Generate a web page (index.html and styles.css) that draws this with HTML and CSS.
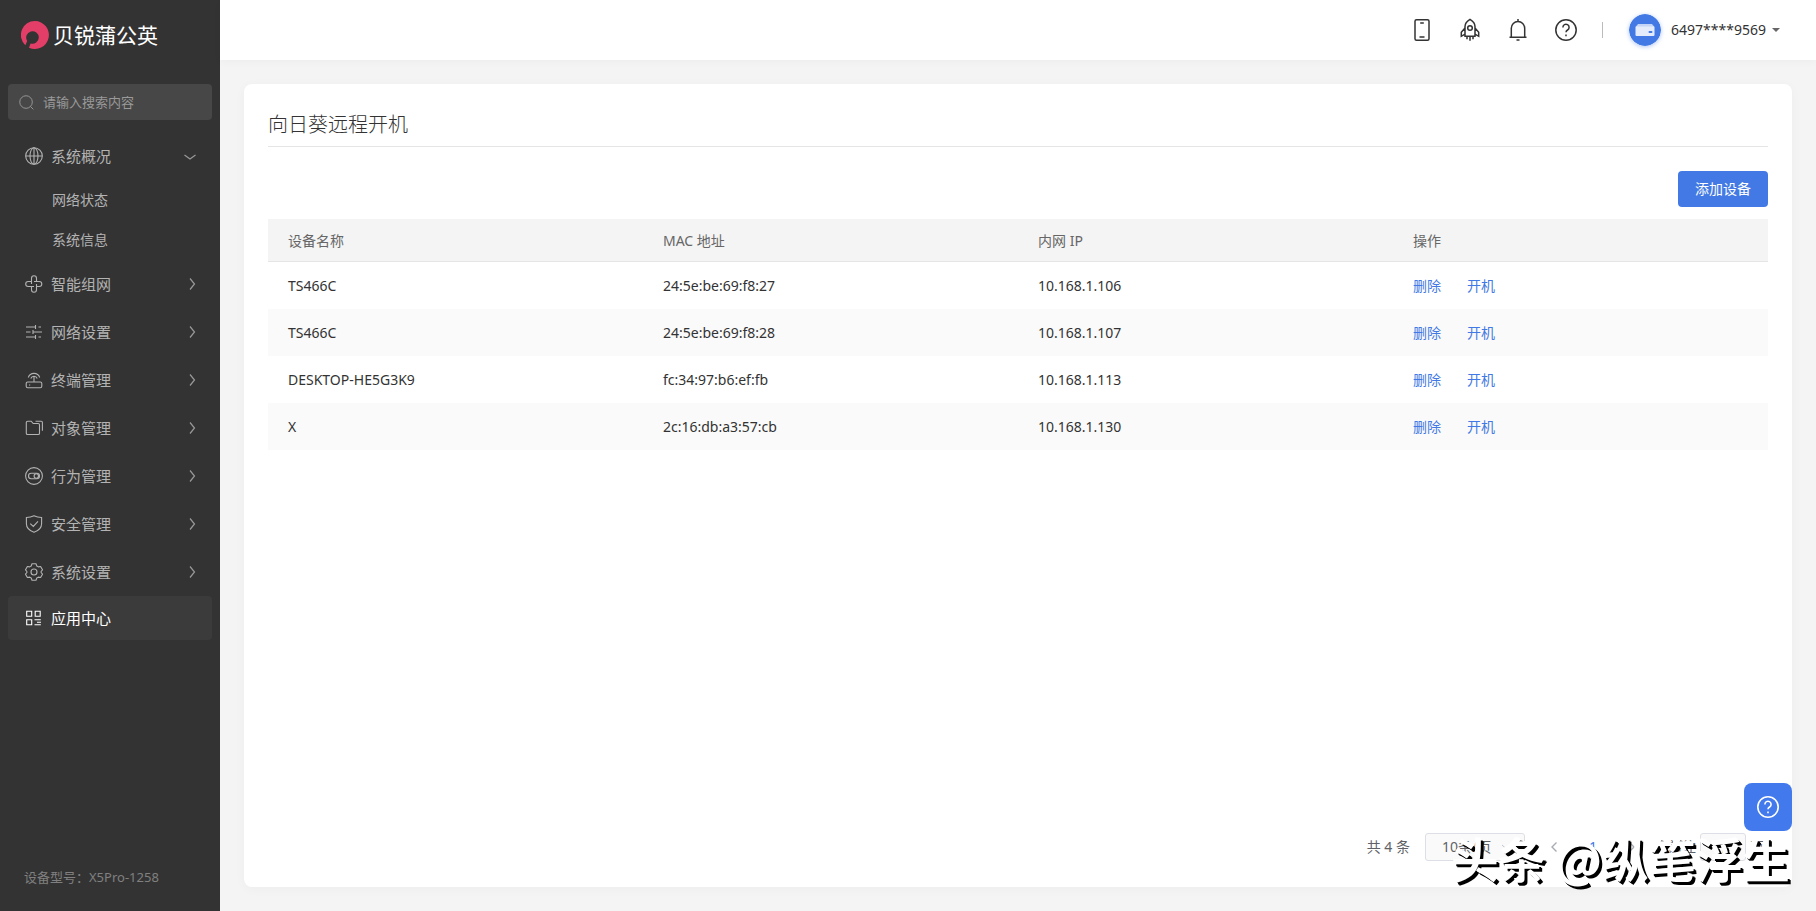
FILE: index.html
```
<!DOCTYPE html>
<html lang="zh-CN">
<head>
<meta charset="utf-8">
<title>向日葵远程开机</title>
<link rel="stylesheet" href="styles.css">
</head>
<body>
<div class="app">
  <aside class="sidebar">
    <a class="brand" href="#">
      <svg class="brand-mark" viewBox="0 0 28 28"><path fill="#e33e67" d="M14 0a14 14 0 1 1-6 26.700l1.600-4.200a6.300 6.300 0 1 0-3.400-2.600L4.300 24.200A14 14 0 0 1 14 0z"/></svg>
      <span>贝锐蒲公英</span>
    </a>
    <label class="search">
      <svg class="search-icon" viewBox="0 0 16 16"><circle cx="7.500" cy="7.500" r="6.700"/><path d="M12.300 12.300l3 3"/></svg>
      <input type="text" placeholder="请输入搜索内容" aria-label="搜索">
    </label>
    <nav class="menu">
      <a class="item" href="#">
        <svg class="icon" viewBox="0 0 18 18"><circle cx="9" cy="9" r="8.300"/><ellipse cx="9" cy="9" rx="4" ry="8.300"/><path d="M.7 9h16.600M9 .7v16.600"/></svg>
        <span>系统概况</span>
        <svg class="arrow down" viewBox="0 0 12 12"><path d="M.5 5L6 9l5.500-4"/></svg>
      </a>
      <a class="sub" href="#">网络状态</a>
      <a class="sub" href="#">系统信息</a>
      <a class="item" href="#">
        <svg class="icon" viewBox="0 0 18 18"><path d="M6.500 9V3.200a2.500 2.500 0 0 1 5 0v3.300M9 6.500h5.300a2.500 2.500 0 0 1 0 5h-2.800M11.500 9v5.800a2.500 2.500 0 0 1-5 0v-3.300M9 11.500H3.200a2.500 2.500 0 0 1 0-5h3.300"/></svg>
        <span>智能组网</span>
        <svg class="arrow" viewBox="0 0 12 12"><path d="M4 .5L8.500 6 4 11.500"/></svg>
      </a>
      <a class="item" href="#">
        <svg class="icon" viewBox="0 0 18 18"><path d="M1 4h10M13.500 4H16M10.500 2v4M1 9h4.500M8 9h9M8 7v4M1 14h10M13.500 14H16M10.500 12v4"/></svg>
        <span>网络设置</span>
        <svg class="arrow" viewBox="0 0 12 12"><path d="M4 .5L8.500 6 4 11.500"/></svg>
      </a>
      <a class="item" href="#">
        <svg class="icon" viewBox="0 0 18 18"><rect x="1.200" y="11" width="15.600" height="5.800" rx="1.500"/><path d="M9 11V5.500M3.300 6.500a6 6 0 0 1 11.400 0M5.800 7.500a3.400 3.400 0 0 1 6.400 0M4 14h1.200"/></svg>
        <span>终端管理</span>
        <svg class="arrow" viewBox="0 0 12 12"><path d="M4 .5L8.500 6 4 11.500"/></svg>
      </a>
      <a class="item" href="#">
        <svg class="icon" viewBox="0 0 18 18"><path d="M1.300 3.500c0-.8.500-1.300 1.300-1.300h3.600l2 2.300h5c.8 0 1.300.5 1.300 1.300v8.400c0 .8-.5 1.300-1.300 1.300H2.600c-.8 0-1.300-.5-1.300-1.300zM10.500 2.200h5.700c.7 0 1.200.5 1.200 1.200v8.400"/></svg>
        <span>对象管理</span>
        <svg class="arrow" viewBox="0 0 12 12"><path d="M4 .5L8.500 6 4 11.500"/></svg>
      </a>
      <a class="item" href="#">
        <svg class="icon" viewBox="0 0 18 18"><circle cx="9" cy="9" r="8.400"/><rect x="3.500" y="6.300" width="11" height="5.400" rx="2.700"/><circle cx="11.300" cy="9" r="2.200"/></svg>
        <span>行为管理</span>
        <svg class="arrow" viewBox="0 0 12 12"><path d="M4 .5L8.500 6 4 11.500"/></svg>
      </a>
      <a class="item" href="#">
        <svg class="icon" viewBox="0 0 18 18"><path d="M9 .8c2.400 1.200 5 1.700 7.600 1.700v6.200c0 4.200-3.200 7-7.600 8.600-4.400-1.600-7.600-4.400-7.600-8.600V2.500C4 2.500 6.600 2 9 .8zM5.300 8.600l3 2.800 4.700-5"/></svg>
        <span>安全管理</span>
        <svg class="arrow" viewBox="0 0 12 12"><path d="M4 .5L8.500 6 4 11.500"/></svg>
      </a>
      <a class="item" href="#">
        <svg class="icon" viewBox="0 0 18 18"><circle cx="9" cy="9" r="3"/><path stroke-linejoin="round" d="M7 .8h4l.8 2.200 1.500.9 2.300-.4 1.900 3.300-1.400 1.700v1l1.400 1.700-1.900 3.300-2.300-.4-1.500.9-.8 2.200H7L6.200 15l-1.500-.9-2.300.4-1.900-3.300 1.400-1.700v-1L.5 6.800l1.900-3.300 2.300.4L6.200 3z"/></svg>
        <span>系统设置</span>
        <svg class="arrow" viewBox="0 0 12 12"><path d="M4 .5L8.500 6 4 11.500"/></svg>
      </a>
      <a class="item active" href="#">
        <svg class="icon" viewBox="0 0 18 18"><path d="M1.700 2.200h5v5h-5zM10.200 2.200h5v5h-5zM1.700 10.700h5v5h-5zM9.500 10.700h6.300M12 13.200h4M9.500 15.700h6.300"/></svg>
        <span>应用中心</span>
      </a>
    </nav>
    <p class="model">设备型号：X5Pro-1258</p>
  </aside>

  <div class="page">
    <header class="topbar">
      <button class="tool" type="button" aria-label="手机">
        <svg viewBox="0 0 24 24"><rect x="5" y="1.700" width="14" height="20.600" rx="1.500"/><path d="M10.200 5h3.600M9.500 19h5"/></svg>
      </button>
      <button class="tool" type="button" aria-label="加速">
        <svg viewBox="0 0 24 24"><path d="M7 18.300V8.500C7 5.500 9 3 12 1.300c3 1.700 5 4.200 5 7.200v9.800zM7 10l-3.700 4.300v4L7 16.200M17 10l3.700 4.300v4L17 16.200M9 18.300v3M12 18.300v4.500M15 18.300v3"/><circle cx="12" cy="10" r="2.300"/></svg>
      </button>
      <button class="tool" type="button" aria-label="通知">
        <svg viewBox="0 0 24 24"><path d="M3.500 19.300h17M5.300 19V10.300a6.700 6.700 0 0 1 13.400 0V19M12 3.500V1M10.500 22h3"/></svg>
      </button>
      <button class="tool" type="button" aria-label="帮助">
        <svg viewBox="0 0 24 24"><circle cx="12" cy="12" r="10.200"/><path d="M8.900 9.400a3.100 3.100 0 1 1 4.700 2.600c-1 .6-1.600 1.100-1.600 2.300M12 16.400v1.800"/></svg>
      </button>
      <span class="divider"></span>
      <button class="account" type="button">
        <svg class="avatar" viewBox="0 0 32 32"><circle cx="16" cy="16" r="16" fill="#4279e4"/><path d="M9 10h14l2.500 3H6.500z" fill="#c3d4f6"/><rect x="6.500" y="12.500" width="19" height="9.500" rx="1" fill="#e4ecfb"/><rect x="19.500" y="17" width="4" height="2" rx="1" fill="#4279e4"/></svg>
        <span>6497****9569</span>
        <svg class="caret" viewBox="0 0 8 4"><path d="M0 0h8L4 4z"/></svg>
      </button>
    </header>

    <main class="content">
      <section class="card">
        <h1>向日葵远程开机</h1>
        <div class="actions"><button class="primary" type="button">添加设备</button></div>
        <table class="devices">
          <thead><tr><th>设备名称</th><th>MAC 地址</th><th>内网 IP</th><th>操作</th></tr></thead>
          <tbody>
            <tr><td>TS466C</td><td>24:5e:be:69:f8:27</td><td>10.168.1.106</td><td><a href="#">删除</a><a href="#">开机</a></td></tr>
            <tr><td>TS466C</td><td>24:5e:be:69:f8:28</td><td>10.168.1.107</td><td><a href="#">删除</a><a href="#">开机</a></td></tr>
            <tr><td>DESKTOP-HE5G3K9</td><td>fc:34:97:b6:ef:fb</td><td>10.168.1.113</td><td><a href="#">删除</a><a href="#">开机</a></td></tr>
            <tr><td>X</td><td>2c:16:db:a3:57:cb</td><td>10.168.1.130</td><td><a href="#">删除</a><a href="#">开机</a></td></tr>
          </tbody>
        </table>
        <footer class="pager">
          <span class="total">共 4 条</span>
          <span class="size">
            <select aria-label="每页条数"><option>10条/页</option></select>
            <svg class="size-arrow" viewBox="0 0 12 12"><path d="M1 4l5 4.500L11 4"/></svg>
          </span>
          <button class="step" type="button" aria-label="上一页"><svg viewBox="0 0 12 12"><path d="M8.500 1.500L4 6l4.500 4.500"/></svg></button>
          <button class="number" type="button">1</button>
          <button class="step" type="button" aria-label="下一页"><svg viewBox="0 0 12 12"><path d="M3.500 1.500L8 6l-4.500 4.500"/></svg></button>
          <label class="jump">前往 <input type="text" value="1"> 页</label>
        </footer>
      </section>
    </main>
  </div>
  <button class="help" type="button" aria-label="帮助">
    <svg viewBox="0 0 24 24"><circle cx="12" cy="12" r="10.200"/><path d="M8.900 9.400a3.100 3.100 0 1 1 4.700 2.600c-1 .6-1.600 1.100-1.600 2.300M12 16.400v1.800"/></svg>
  </button>
  <div class="watermark">头条 @纵笔浮生</div>
</div>
</body>
</html>
```
FILE: styles.css
```
* { box-sizing: border-box; }
body {
  margin: 0;
  font: 14px/20px "Noto Sans", "Noto Sans CJK SC", sans-serif;
  color: #333;
}
a { text-decoration: none; color: inherit; }
button, input, select { font: inherit; color: inherit; }
button { border: 0; background: none; padding: 0; cursor: pointer; }
svg { fill: none; stroke: currentColor; flex: none; display: block; }

.app { display: flex; min-height: 100vh; background: #f4f4f4; }

.sidebar {
  width: 220px;
  flex: none;
  display: flex;
  flex-direction: column;
  padding: 20px 8px 24px;
  background: #333;
  color: #b3b3b3;
}
.brand {
  display: flex;
  align-items: center;
  gap: 4px;
  height: 30px;
  padding-left: 13px;
  font-size: 21px;
  color: #fff;
}
.brand-mark { width: 28px; height: 28px; stroke: none; }
.search {
  display: flex;
  align-items: center;
  gap: 9px;
  height: 36px;
  margin-top: 34px;
  padding: 0 11px;
  border-radius: 4px;
  background: #474747;
}
.search-icon { width: 15px; height: 15px; color: #999; }
.search input {
  flex: 1;
  min-width: 0;
  padding: 0;
  border: 0;
  outline: 0;
  background: none;
  font-size: 13px;
}
.search input::placeholder { color: #999; opacity: 1; }

.menu { display: flex; flex-direction: column; margin-top: 12px; }
.item {
  display: flex;
  align-items: center;
  gap: 8px;
  height: 48px;
  padding: 0 14px 0 17px;
  font-size: 15px;
  border-radius: 4px;
}
.item span { flex: 1; }
.icon { width: 18px; height: 18px; stroke-width: 1.1; }
.arrow { width: 12px; height: 12px; color: #999; stroke-width: 1.2; }
.arrow.down { margin-right: 2px; }
.item.active { height: 44px; background: #3b3b3b; color: #fff; }
.sub { height: 40px; padding-left: 44px; line-height: 40px; }
.model { margin: auto 0 0 16px; font-size: 13px; color: #808080; }

.page { flex: 1; min-width: 0; display: flex; flex-direction: column; }
.topbar {
  display: flex;
  align-items: center;
  justify-content: flex-end;
  height: 60px;
  padding-right: 36px;
  background: #fff;
  box-shadow: 0 2px 8px rgba(0, 0, 0, .03);
}
.tool { margin-right: 24px; }
.tool svg { width: 24px; height: 24px; stroke-width: 1.5; }
.divider { width: 1px; height: 16px; margin-right: 26px; background: #bbb; }
.account { display: flex; align-items: center; gap: 10px; }
.avatar { width: 32px; height: 32px; stroke: none; border-radius: 50%; box-shadow: 0 1px 4px rgba(66, 121, 228, .4); }
.caret { width: 8px; height: 4px; margin-left: -4px; stroke: none; fill: #666; }

.content { flex: 1; display: flex; padding: 24px; }
.card {
  flex: 1;
  display: flex;
  flex-direction: column;
  padding: 25px 24px 26px;
  border-radius: 8px;
  background: #fff;
  box-shadow: 0 2px 12px rgba(0, 0, 0, .03);
}
h1 {
  margin: 0;
  padding-bottom: 5px;
  border-bottom: 1px solid #e5e5e5;
  font-size: 20px;
  line-height: 32px;
  font-weight: 300;
}
.actions { display: flex; justify-content: flex-end; padding: 24px 0 12px; }
.primary { width: 90px; height: 36px; border-radius: 4px; background: #4279e4; color: #fff; }

.devices { width: 100%; table-layout: fixed; border-collapse: separate; border-spacing: 0; }
.devices th {
  height: 43px;
  padding: 1px 20px 0;
  border-bottom: 1px solid #e5e5e5;
  background: #f4f4f4;
  color: #666;
  font-weight: 400;
  text-align: left;
}
.devices td { height: 47px; padding: 0 20px; }
.devices tbody tr:nth-child(even) { background: #fafafa; }
.devices a { margin-right: 26px; color: #4279e4; }

.pager {
  display: flex;
  align-items: center;
  justify-content: flex-end;
  margin-top: auto;
  color: #606266;
}
.total { margin-right: 15px; }
.size { position: relative; margin-right: 20px; }
.size select {
  appearance: none;
  display: block;
  width: 100px;
  height: 28px;
  padding: 0 16px;
  border: 1px solid #dcdfe6;
  border-radius: 3px;
  background: #fafafa;
}
.size-arrow { position: absolute; right: 12px; top: 8px; width: 12px; height: 12px; color: #c0c4cc; }
.step { display: grid; place-items: center; width: 18px; height: 28px; color: #a8abb2; }
.step svg { width: 12px; height: 12px; stroke-width: 1.4; }
.number { width: 60px; height: 28px; color: #4279e4; }
.jump { display: flex; align-items: center; gap: 4px; margin: 0 4px 0 27px; }
.jump input {
  width: 46px;
  height: 28px;
  padding: 0;
  border: 1px solid #dcdfe6;
  border-radius: 3px;
  background: #fafafa;
  text-align: center;
}

.help {
  position: fixed;
  right: 24px;
  bottom: 80px;
  display: grid;
  place-items: center;
  width: 48px;
  height: 48px;
  border-radius: 8px;
  background: #4279ec;
  color: #fff;
}
.help svg { width: 24px; height: 24px; stroke-width: 1.6; }
.watermark {
  position: fixed;
  right: 26px;
  bottom: 23px;
  font-family: "Noto Sans CJK SC", sans-serif;
  font-size: 47px;
  line-height: 60px;
  font-weight: 500;
  color: #fff;
  text-shadow: -1px -1px 0 #fff, 2px 2px 0 #000, 3px 3px 0 #000;
  white-space: nowrap;
  pointer-events: none;
}
```
